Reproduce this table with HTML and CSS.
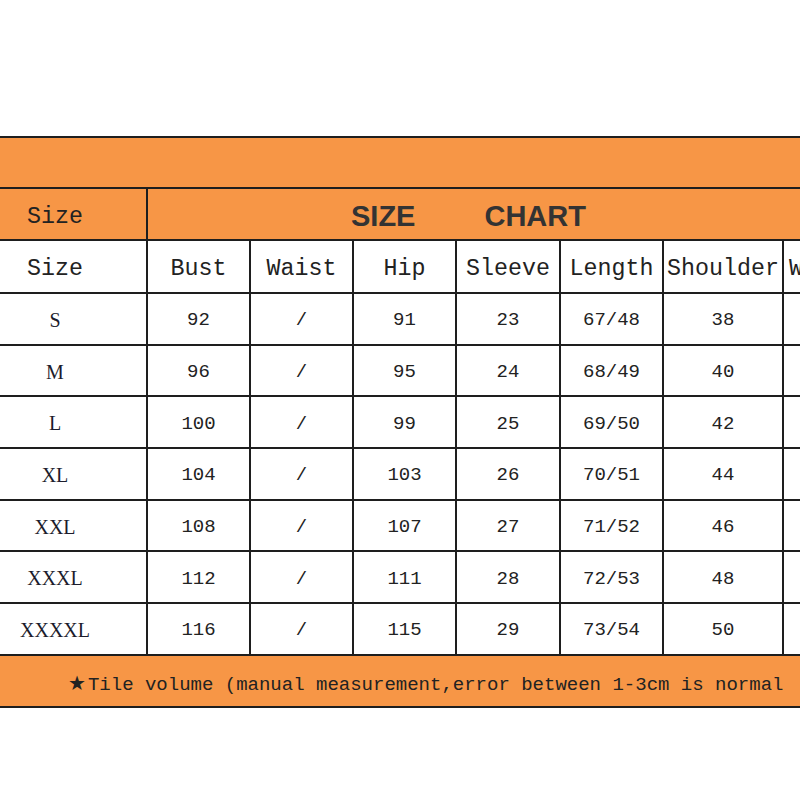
FILE: index.html
```html
<!DOCTYPE html>
<html lang="en">
<head>
<meta charset="utf-8">
<title>Size Chart</title>
<link rel="stylesheet" href="styles.css">
</head>
<body>
<div class="page">
  <table class="chart">
    <colgroup>
      <col class="c-size">
      <col class="c-std">
      <col class="c-std">
      <col class="c-std">
      <col class="c-wide1">
      <col class="c-std">
      <col class="c-shoulder">
      <col class="c-extra">
    </colgroup>
    <tr class="band">
      <td colspan="8"></td>
    </tr>
    <tr class="title-row">
      <td class="label">Size</td>
      <td class="title" colspan="7"><span class="t1">SIZE</span><span class="t2">CHART</span></td>
    </tr>
    <tr class="head">
      <td>Size</td>
      <td>Bust</td>
      <td>Waist</td>
      <td>Hip</td>
      <td>Sleeve</td>
      <td>Length</td>
      <td>Shoulder</td>
      <td class="cut">Weight</td>
    </tr>
    <tr class="data"><td class="sz">S</td><td>92</td><td>/</td><td>91</td><td>23</td><td>67/48</td><td>38</td><td></td></tr>
    <tr class="data"><td class="sz">M</td><td>96</td><td>/</td><td>95</td><td>24</td><td>68/49</td><td>40</td><td></td></tr>
    <tr class="data"><td class="sz">L</td><td>100</td><td>/</td><td>99</td><td>25</td><td>69/50</td><td>42</td><td></td></tr>
    <tr class="data"><td class="sz">XL</td><td>104</td><td>/</td><td>103</td><td>26</td><td>70/51</td><td>44</td><td></td></tr>
    <tr class="data"><td class="sz">XXL</td><td>108</td><td>/</td><td>107</td><td>27</td><td>71/52</td><td>46</td><td></td></tr>
    <tr class="data"><td class="sz">XXXL</td><td>112</td><td>/</td><td>111</td><td>28</td><td>72/53</td><td>48</td><td></td></tr>
    <tr class="data"><td class="sz">XXXXL</td><td>116</td><td>/</td><td>115</td><td>29</td><td>73/54</td><td>50</td><td></td></tr>
    <tr class="foot">
      <td colspan="8"><span class="star">★</span>Tile volume (manual measurement,error between 1-3cm is normal</td>
    </tr>
  </table>
</div>
</body>
</html>
```

FILE: styles.css
```css
html, body {
  margin: 0;
  padding: 0;
  background: #ffffff;
  overflow: hidden;
}

.page {
  width: 800px;
  height: 800px;
  overflow: hidden;
  padding-top: 136px;
  box-sizing: border-box;
}

.chart {
  border-collapse: collapse;
  table-layout: fixed;
  width: 940px;
  margin-left: -38px;
  color: #222222;
}

.c-size { width: 184px; }
.c-std { width: 103px; }
.c-wide1 { width: 104px; }
.c-shoulder { width: 120px; }
.c-extra { width: 120px; }

.chart td {
  border: 2px solid #1e1e1e;
  padding: 0;
  text-align: center;
  vertical-align: middle;
  white-space: nowrap;
  overflow: hidden;
  height: 50px;
  box-sizing: border-box;
}

.band td {
  background: #f79646;
  height: 51px;
}

.title-row td {
  background: #f79646;
  height: 52px;
  padding-top: 5px;
}

.title-row .label {
  font-family: "Liberation Mono", monospace;
  font-size: 23.3px;
}

.title-row .title {
  text-align: left;
  padding-left: 203px;
  font-family: "Liberation Sans", Arial, sans-serif;
  font-weight: bold;
  font-size: 29px;
  color: #333333;
}

.t1 {
  margin-right: 69px;
}

.head td {
  font-family: "Liberation Mono", monospace;
  font-size: 23.3px;
  height: 53px;
  padding-top: 5px;
}

.head .cut {
  text-align: left;
  padding-left: 5px;
}

.data td {
  font-family: "Liberation Mono", monospace;
  font-size: 19px;
  height: 51.7px;
  padding-top: 3px;
}

.data .sz {
  font-family: "Liberation Serif", "Times New Roman", serif;
  font-size: 20px;
  color: #1c1c2c;
}

.foot td {
  background: #f79646;
  text-align: left;
  padding-left: 104px;
  padding-top: 5px;
  font-family: "Liberation Mono", monospace;
  font-size: 19px;
  height: 52px;
}

.star {
  font-family: "DejaVu Sans", sans-serif;
  font-size: 20px;
  margin-right: 2px;
}
```
